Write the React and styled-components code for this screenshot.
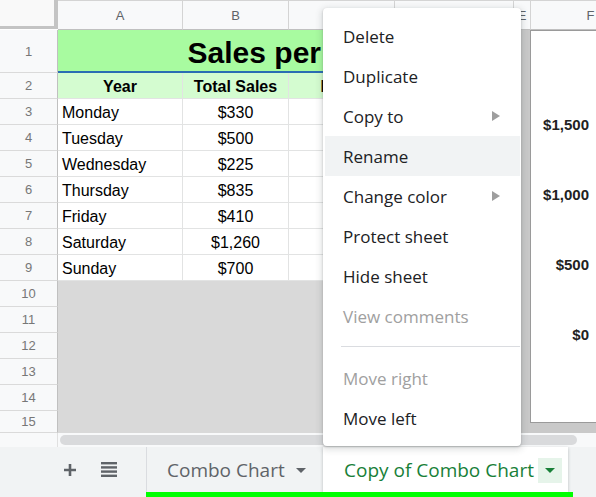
import React from 'react';
import styled, { createGlobalStyle } from 'styled-components';

const GlobalStyle = createGlobalStyle`
  html, body {
    margin: 0;
    padding: 0;
    background: #fff;
  }
  body {
    font-family: 'Liberation Sans', Arial, sans-serif;
  }
  * {
    box-sizing: border-box;
  }
`;

const Page = styled.div`
  width: 596px;
  height: 497px;
  position: relative;
  overflow: hidden;
  display: flex;
  flex-direction: column;
  background: #fff;
`;

const SheetArea = styled.div`
  position: relative;
  flex: none;
  height: 433px;
  overflow: hidden;
`;

const Grid = styled.div`
  display: grid;
  width: max-content;
  grid-template-columns: 58px 125px 106px 106px 119px 17px 120px;
  grid-template-rows: 30px 43px repeat(13, 26px) 22px;
`;

const Corner = styled.div`
  background: #f9f9f9;
  border-right: 4px solid #c4c4c4;
  border-bottom: 3px solid #c4c4c4;
  margin-bottom: 1px;
`;

const ColHeader = styled.div`
  background: #f8f9fa;
  border-right: 1px solid #d4d4d4;
  border-bottom: 1px solid #c0c0c0;
  border-top: 1px solid #d4d4d4;
  display: flex;
  align-items: center;
  justify-content: center;
  font-size: 13px;
  color: #5f6368;
`;

const RowHeader = styled.div`
  background: #f8f9fa;
  border-right: 1px solid #c0c0c0;
  border-bottom: 1px solid #dadada;
  display: flex;
  align-items: center;
  justify-content: center;
  font-size: 13px;
  color: #777;
`;

const Cell = styled.div`
  background: ${(p) => p.$bg || '#fff'};
  border-right: 1px solid #e2e3e3;
  border-bottom: 1px solid #e2e3e3;
  display: flex;
  align-items: center;
  justify-content: ${(p) => (p.$center ? 'center' : 'flex-start')};
  padding: 3px 4px 0;
  font-size: 16px;
  font-weight: ${(p) => (p.$bold ? 700 : 400)};
  color: #000;
  white-space: nowrap;
  overflow: hidden;
`;

const TitleCell = styled.div`
  grid-column: span 4;
  background: #a8fba0;
  border-bottom: 2px solid #2a6db3;
  display: flex;
  align-items: center;
  justify-content: center;
  padding: 4px 0 0 0;
  font-size: 30px;
  font-weight: 700;
  color: #000;
  white-space: nowrap;
`;

const GrayCell = styled.div`
  background: #d9d9d9;
`;

const Chart = styled.div`
  position: absolute;
  left: 521px;
  top: 30px;
  width: 100px;
  height: 403px;
  background: #c9c9c9;
  padding: 0 0 10px 9px;
`;

const ChartInner = styled.div`
  height: 100%;
  background: #fff;
  border: 1px solid #9a9a9a;
  display: flex;
  flex-direction: column;
  gap: 50px;
  padding-top: 84px;
`;

const AxisLabel = styled.div`
  width: 58px;
  height: 20px;
  line-height: 20px;
  text-align: right;
  font-size: 15px;
  font-weight: 700;
  color: #222;
`;

const ScrollRow = styled.div`
  flex: none;
  height: 14px;
  display: flex;
  align-items: center;
  background: #f8f9fa;
`;

const ScrollStub = styled.div`
  width: 58px;
  height: 100%;
  border-right: 1px solid #e0e0e0;
`;

const Thumb = styled.div`
  width: 517px;
  height: 10px;
  margin-left: 2px;
  border-radius: 5px;
  background: #d9dadc;
`;

const TabBar = styled.div`
  flex: 1;
  display: flex;
  flex-direction: column;
  background: #f1f3f4;
`;

const TabRow = styled.div`
  height: 45px;
  display: flex;
  align-items: stretch;
`;

const TabTools = styled.div`
  width: 146px;
  display: flex;
  align-items: center;
  gap: 24px;
  padding: 0 0 0 63px;
  color: #5f6368;
`;

const Tab = styled.div`
  display: flex;
  align-items: center;
  font-family: 'Open Sans', 'Liberation Sans', sans-serif;
  font-size: 19px;
  white-space: nowrap;
  ${(p) =>
    p.$active
      ? `
    background: #fff;
    color: #188038;
    font-weight: 500;
    padding: 0 6px 0 21px;
    box-shadow: 0 1px 3px rgba(60, 64, 67, 0.3);
  `
      : `
    width: 177px;
    color: #5f6368;
    padding: 0 0 0 20px;
    border-left: 1px solid #dadce0;
  `}
`;

const Caret = styled.span`
  display: inline-flex;
  align-items: center;
  justify-content: center;
  margin-left: ${(p) => (p.$boxed ? '4px' : '11px')};
  width: ${(p) => (p.$boxed ? '24px' : 'auto')};
  height: ${(p) => (p.$boxed ? '25px' : 'auto')};
  background: ${(p) => (p.$boxed ? '#e6f4ea' : 'transparent')};
  margin-top: 2px;
`;

const GreenBar = styled.div`
  height: 5px;
  width: 427px;
  margin-left: 146px;
  background: #00ff00;
`;

const Menu = styled.div`
  position: absolute;
  left: 323px;
  top: 8px;
  width: 198px;
  z-index: 10;
  background: #fff;
  border-radius: 4px;
  box-shadow: 0 2px 6px 2px rgba(60, 64, 67, 0.15), 0 1px 2px rgba(60, 64, 67, 0.3);
  padding: 8px 1px 8px 2px;
  font-family: 'Open Sans', 'Liberation Sans', sans-serif;
`;

const MenuItem = styled.div`
  height: 40px;
  display: flex;
  align-items: center;
  justify-content: space-between;
  padding: 0 20px 0 18px;
  font-size: 17px;
  color: ${(p) => (p.$disabled ? '#a0a0a0' : '#202124')};
  background: ${(p) => (p.$hover ? '#f1f3f4' : 'transparent')};
`;

const Separator = styled.div`
  height: 1px;
  margin: 10px 0 11px 16px;
  background: #dadce0;
`;

const SubArrow = () => (
  <svg width="8" height="10" viewBox="0 0 8 10">
    <path d="M0 0 L8 5 L0 10 Z" fill="#9e9e9e" />
  </svg>
);

const DownCaret = ({ color }) => (
  <svg width="10" height="5" viewBox="0 0 10 5">
    <path d="M0 0 L10 0 L5 5 Z" fill={color} />
  </svg>
);

const PlusIcon = () => (
  <svg width="14" height="14" viewBox="0 0 14 14">
    <path d="M7 1 V13 M1 7 H13" stroke="#5f6368" strokeWidth="2.6" />
  </svg>
);

const ListIcon = () => (
  <svg width="16" height="15" viewBox="0 0 16 15">
    <rect x="0" y="0" width="16" height="2.4" fill="#5f6368" />
    <rect x="0" y="4.2" width="16" height="2.4" fill="#5f6368" />
    <rect x="0" y="8.4" width="16" height="2.4" fill="#5f6368" />
    <rect x="0" y="12.6" width="16" height="2.4" fill="#5f6368" />
  </svg>
);

const days = [
  ['Monday', '$330'],
  ['Tuesday', '$500'],
  ['Wednesday', '$225'],
  ['Thursday', '$835'],
  ['Friday', '$410'],
  ['Saturday', '$1,260'],
  ['Sunday', '$700'],
];

const cols = ['A', 'B', 'C', 'D', 'E', 'F'];

const menuItems = [
  { label: 'Delete' },
  { label: 'Duplicate' },
  { label: 'Copy to', sub: true },
  { label: 'Rename', hover: true },
  { label: 'Change color', sub: true },
  { label: 'Protect sheet' },
  { label: 'Hide sheet' },
  { label: 'View comments', disabled: true },
  { sep: true },
  { label: 'Move right', disabled: true },
  { label: 'Move left' },
];

export default function App() {
  return (
    <>
      <GlobalStyle />
      <Page>
        <SheetArea>
          <Grid>
            <Corner />
            {cols.map((c) => (
              <ColHeader key={c}>{c === 'C' || c === 'D' ? '' : c}</ColHeader>
            ))}

            <RowHeader>1</RowHeader>
            <TitleCell>Sales per Day</TitleCell>
            <Cell />
            <Cell />

            <RowHeader>2</RowHeader>
            <Cell $bg="#d4fcd0" $center $bold>Year</Cell>
            <Cell $bg="#d4fcd0" $center $bold>Total Sales</Cell>
            <Cell $bg="#d4fcd0" $center $bold>Profit</Cell>
            <Cell $bg="#d4fcd0" />
            <Cell />
            <Cell />

            {days.map(([d, v], i) => (
              <React.Fragment key={d}>
                <RowHeader>{i + 3}</RowHeader>
                <Cell>{d}</Cell>
                <Cell $center>{v}</Cell>
                <Cell />
                <Cell />
                <Cell />
                <Cell />
              </React.Fragment>
            ))}

            {[10, 11, 12, 13, 14, 15].map((n) => (
              <React.Fragment key={n}>
                <RowHeader>{n}</RowHeader>
                <GrayCell />
                <GrayCell />
                <GrayCell />
                <GrayCell />
                <GrayCell />
                <GrayCell />
              </React.Fragment>
            ))}
          </Grid>

          <Chart>
            <ChartInner>
              <AxisLabel>$1,500</AxisLabel>
              <AxisLabel>$1,000</AxisLabel>
              <AxisLabel>$500</AxisLabel>
              <AxisLabel>$0</AxisLabel>
            </ChartInner>
          </Chart>
        </SheetArea>

        <ScrollRow>
          <ScrollStub />
          <Thumb />
        </ScrollRow>

        <TabBar>
          <TabRow>
            <TabTools>
              <PlusIcon />
              <ListIcon />
            </TabTools>
            <Tab>
              Combo Chart
              <Caret>
                <DownCaret color="#5f6368" />
              </Caret>
            </Tab>
            <Tab $active>
              Copy of Combo Chart
              <Caret $boxed>
                <DownCaret color="#188038" />
              </Caret>
            </Tab>
          </TabRow>
          <GreenBar />
        </TabBar>

        <Menu>
          {menuItems.map((m, i) =>
            m.sep ? (
              <Separator key={i} />
            ) : (
              <MenuItem key={m.label} $disabled={m.disabled} $hover={m.hover}>
                {m.label}
                {m.sub && <SubArrow />}
              </MenuItem>
            )
          )}
        </Menu>
      </Page>
    </>
  );
}
